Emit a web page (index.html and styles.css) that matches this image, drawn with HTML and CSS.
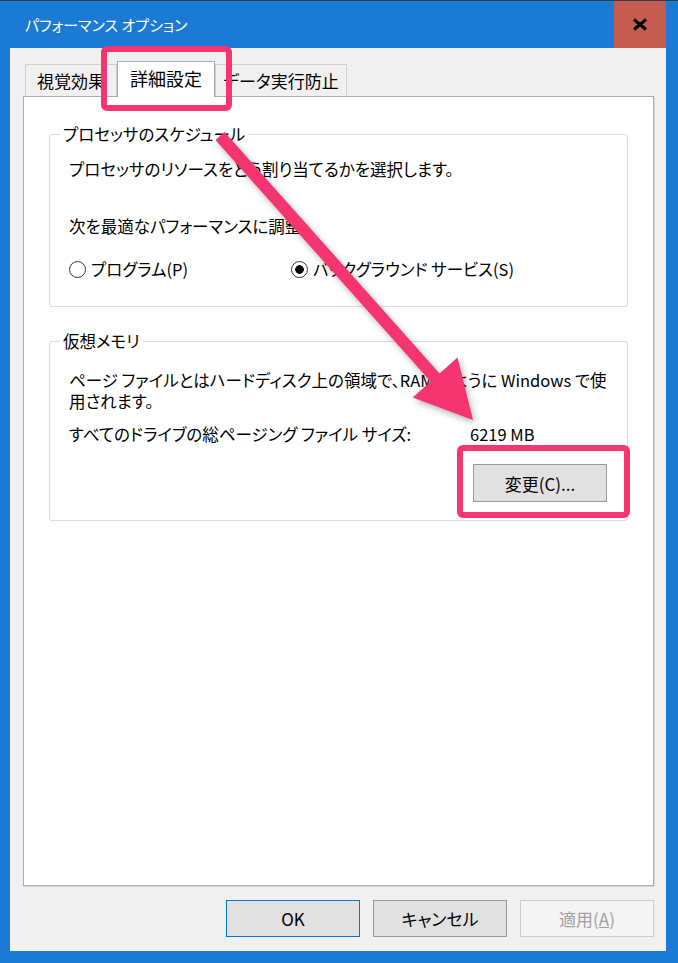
FILE: index.html
```html
<!DOCTYPE html>
<html lang="ja">
<head>
    <meta charset="UTF-8">
    <meta name="viewport" content="width=device-width, initial-scale=1.0">
    <link rel="stylesheet" href="styles.css">
    <title>パフォーマンス オプション</title>
</head>
<body>
    <div class="window">
        <div class="titlebar">
            <span class="title">パフォーマンス オプション</span>
            <div class="close">
                <svg width="16" height="13" viewBox="0 0 16 13">
                    <path d="M2 1.5 L14 11.5 M14 1.5 L2 11.5" stroke="#000" stroke-width="3" fill="none"/>
                </svg>
            </div>
        </div>

        <div class="client">
            <div class="tabs">
                <div class="tab tab-visual">視覚効果</div>
                <div class="tab tab-advanced active">詳細設定</div>
                <div class="tab tab-dep">データ実行防止</div>
            </div>

            <div class="panel">
                <fieldset class="group sched">
                    <legend>プロセッサのスケジュール</legend>
                    <div class="line">プロセッサのリソースをどう割り当てるかを選択します。</div>
                    <div class="line adjust">次を最適なパフォーマンスに調整:</div>
                    <div class="radios">
                        <div class="option"><span class="radio"></span>プログラム(P)</div>
                        <div class="option"><span class="radio checked"></span>バックグラウンド サービス(S)</div>
                    </div>
                </fieldset>

                <fieldset class="group vm">
                    <legend>仮想メモリ</legend>
                    <div class="line">ページ ファイルとはハードディスク上の領域で、RAM のように Windows で使</div>
                    <div class="line">用されます。</div>
                    <div class="line total">
                        <span class="total-label">すべてのドライブの総ページング ファイル サイズ:</span>
                        <span>6219 MB</span>
                    </div>
                    <div class="change-row">
                        <button class="btn">変更(C)...</button>
                    </div>
                </fieldset>
            </div>

            <div class="buttons">
                <button class="btn default">OK</button>
                <button class="btn">キャンセル</button>
                <button class="btn disabled">適用(<u>A</u>)</button>
            </div>
        </div>

        <!-- annotation on top of the screenshot -->
        <svg class="annot" width="678" height="963" viewBox="0 0 678 963">
            <rect x="104" y="49" width="125" height="59" rx="3" fill="none" stroke="#f5356f" stroke-width="6"/>
            <rect x="460" y="448" width="167" height="67" rx="3" fill="none" stroke="#f5356f" stroke-width="6"/>
            <polygon class="arrow" points="224.5,132 439.6,373.4 457.5,357.4 473,420 412.7,397.4 430.6,381.4 215.5,140" fill="#f5356f"/>
        </svg>
    </div>
</body>
</html>
```

FILE: styles.css
```css
body {
    margin: 0;
    font-family: "Noto Sans CJK JP", "Noto Sans", sans-serif;
    font-feature-settings: "palt";
    color: #000;
}

.window {
    position: relative;
    width: 678px;
    height: 963px;
    box-sizing: border-box;
    background-color: #1a7ad4;
    border-top: 1px solid #2d3e50;
    padding: 0 12px 12px 10px;
    display: flex;
    flex-direction: column;
}

.titlebar {
    height: 47px;
    display: flex;
    align-items: center;
    justify-content: space-between;
}

.title {
    color: #fff;
    font-size: 15px;
    margin-left: 15px;
}

.close {
    width: 52px;
    height: 47px;
    background-color: #c75c52;
    display: flex;
    align-items: center;
    justify-content: center;
}

.client {
    flex: 1;
    background-color: #f0f0f0;
    padding: 13px 12px 0 13px;
    display: flex;
    flex-direction: column;
}

.tabs {
    height: 35px;
    display: flex;
    align-items: flex-end;
    padding-left: 2px;
}

.tab {
    height: 32px;
    box-sizing: border-box;
    border: 1px solid #cfcfcf;
    border-bottom: none;
    background-color: #f0f0f0;
    font-size: 17px;
    display: flex;
    align-items: center;
    justify-content: center;
}

.tab-visual { width: 92px; }
.tab-advanced { width: 98px; font-size: 18px; }
.tab-dep { width: 132px; }

.tab.active {
    height: 36px;
    background-color: #fff;
    border-color: #adadad;
    margin-bottom: -1px;
    padding-bottom: 3px;
    position: relative;
    z-index: 1;
}

.panel {
    flex: 1;
    background-color: #fff;
    border: 1px solid #adadad;
    box-shadow: 1px 1px 0 #d8d8d8;
    padding: 0 25px;
}

.group {
    min-width: 0;
    margin: 27px 0 0;
    border: 1px solid #dcdcdc;
    border-radius: 3px;
    padding: 14px 20px 26px 19px;
    font-size: 16.5px;
    line-height: 21px;
}

.group legend {
    margin-left: -9px;
    padding: 0 3px;
    line-height: 21px;
}

.group.vm {
    margin-top: 24px;
    padding-top: 18px;
    padding-bottom: 18px;
}

.line {
    white-space: nowrap;
}

.adjust {
    margin-top: 36px;
}

.radios {
    margin-top: 22px;
    display: grid;
    grid-template-columns: 222px auto;
}

.option {
    display: flex;
    align-items: center;
    gap: 5px;
}

.radio {
    width: 17px;
    height: 17px;
    box-sizing: border-box;
    border: 1px solid #333;
    border-radius: 50%;
    background-color: #fff;
}

.radio.checked {
    background: radial-gradient(circle, #000 0, #000 4px, #fff 4.6px);
}

.total {
    margin-top: 12px;
    display: flex;
}

.total-label {
    width: 401px;
}

.change-row {
    margin-top: 19px;
    display: flex;
    justify-content: flex-end;
}

.btn {
    width: 134px;
    height: 38px;
    box-sizing: border-box;
    background-color: #e1e1e1;
    border: 1px solid #999;
    font-family: "Noto Sans CJK JP", "Noto Sans", sans-serif;
    font-feature-settings: "palt";
    font-size: 17px;
    color: #000;
    padding: 0;
}

.buttons {
    height: 65px;
    box-sizing: border-box;
    padding-top: 14px;
    display: flex;
    justify-content: flex-end;
    gap: 13px;
}

.buttons .btn {
    height: 37px;
}

.btn.default {
    border-color: #0078d7;
}

.btn.disabled {
    background-color: #f4f4f4;
    border-color: #cccccc;
    color: #a0a0a0;
}

.annot {
    position: absolute;
    top: -1px;
    left: 0;
    pointer-events: none;
}

.arrow {
    filter: drop-shadow(2px 3px 3px rgba(0, 0, 0, 0.3));
}
```
